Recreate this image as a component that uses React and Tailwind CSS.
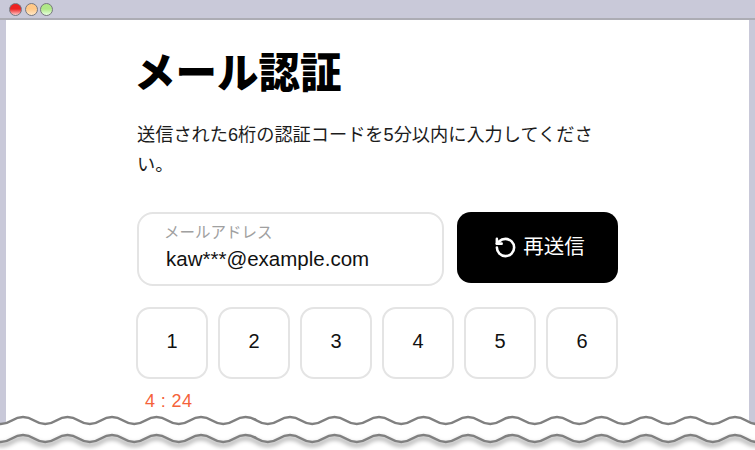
import React from "react";

const FONT = "font-['Liberation_Sans','Noto_Sans_CJK_JP',sans-serif]";

function Dot({ from, to }) {
  return (
    <span
      className="block w-[13px] h-[13px] rounded-full border border-[#77777f]"
      style={{ background: `linear-gradient(${from} 0%, ${from} 45%, ${to} 100%)` }}
    />
  );
}

function wavePath(y, amp, period, width) {
  const start = 0.75 - period;
  let d = `M${start} ${y + amp}`;
  for (let x = start; x < width + period; x += period) {
    d += ` C${x + period / 4} ${y + amp} ${x + period / 4} ${y - amp} ${x + period / 2} ${y - amp}`;
    d += ` C${x + (3 * period) / 4} ${y - amp} ${x + (3 * period) / 4} ${y + amp} ${x + period} ${y + amp}`;
  }
  return d;
}

function Waves() {
  const upper = wavePath(420.5, 3.5, 44.5, 755);
  const lower = wavePath(438.5, 3.5, 44.5, 755);
  return (
    <svg className="absolute left-0 top-[400px]" width="755" height="50" viewBox="0 400 755 50">
      <path d={`${upper} L800 460 L-46 460 Z`} fill="#fff" />
      <path d={lower} transform="translate(0 3)" fill="none" stroke="#000" strokeOpacity="0.3" strokeWidth="4" className="blur-[2px]" />
      <path d={upper} fill="none" stroke="#808080" strokeWidth="2.6" />
      <path d={lower} fill="none" stroke="#808080" strokeWidth="2.6" />
    </svg>
  );
}

function Digit({ n }) {
  return (
    <div className="w-[72px] h-[72px] pb-[4px] flex items-center justify-center rounded-[14px] border-2 border-[#e4e4e4] text-[20px] text-[#111]">
      {n}
    </div>
  );
}

export default function App() {
  return (
    <div className={`relative w-[755px] h-[450px] overflow-hidden bg-[#c9c9d9] ${FONT}`}>
      <div className="h-[20px] border-b-2 border-[#acacb4] flex items-start gap-[2.5px] pl-[9px] pt-[3px]">
        <Dot from="#ee2222" to="#ffc8c8" />
        <Dot from="#ffc888" to="#ffe8c8" />
        <Dot from="#b0e888" to="#e8ffe0" />
      </div>
      <div className="mx-[6px] h-[430px] bg-white pl-[131px] pr-[131px] text-black">
        <h1 className="m-0 pt-[28px] -ml-[3px] text-[41.5px] leading-[52px] font-black">メール認証</h1>
        <p className="mt-[20px] w-[465px] text-[18.2px] leading-[30px] text-[#1c1c1c]">
          送信された6桁の認証コードを5分以内に入力してください。
        </p>
        <div className="mt-[32px] flex gap-[13px]">
          <div className="w-[307px] h-[74px] rounded-[16px] border-2 border-[#e4e4e4] pl-[25px] pt-[9px]">
            <div className="text-[15.5px] leading-[20px] text-[#a0a0a0]">メールアドレス</div>
            <div className="ml-[2px] mt-[2px] text-[20.5px] leading-[28px] text-[#111]">kaw***@example.com</div>
          </div>
          <button className="w-[161px] h-[71px] pl-[4px] rounded-[14px] bg-black text-white flex items-center justify-center gap-[6px] text-[20.5px]">
            <svg width="23" height="23" viewBox="0 0 24 24" fill="none" stroke="#fff" strokeWidth="2.7" strokeLinecap="round" strokeLinejoin="round">
              <path d="M3 12a9 9 0 1 0 9-9 9.75 9.75 0 0 0-6.74 2.74L3 8" />
              <path d="M3 3v5h5" />
            </svg>
            <span>再送信</span>
          </button>
        </div>
        <div className="mt-[21px] -ml-[1px] flex gap-[10px]">
          {[1, 2, 3, 4, 5, 6].map((n) => (
            <Digit key={n} n={n} />
          ))}
        </div>
        <div className="mt-[11px] ml-[8px] text-[18px] leading-[22px] tracking-[0.4px] text-[#f5623a]">4 : 24</div>
      </div>
      <Waves />
    </div>
  );
}
